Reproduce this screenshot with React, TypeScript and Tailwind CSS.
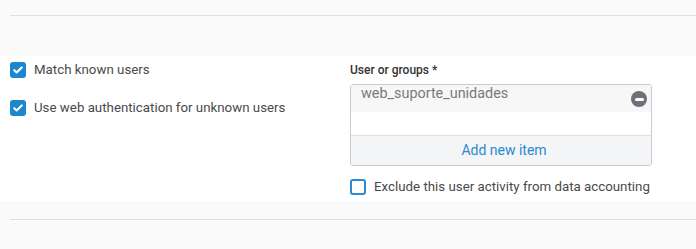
import React from "react";

const Check = () => (
  <span className="flex h-4 w-4 shrink-0 items-center justify-center rounded-[3px] bg-[#1b87cf]">
    <svg viewBox="0 0 16 16" className="h-3 w-3" fill="none">
      <path d="M3 8.3l3.2 3L13 4.6" stroke="#fff" strokeWidth="2.8" strokeLinecap="round" strokeLinejoin="round" />
    </svg>
  </span>
);

const App = () => {
  return (
    <div className="h-[249px] w-[696px] bg-[#fafafa] font-['Roboto',sans-serif]">
      {/* top divider */}
      <div className="pl-[10px] pt-[15px] h-[56px]">
        <div className="h-px bg-[#dedede]" />
      </div>

      {/* form section */}
      <div className="flex h-[145px] bg-white pl-[10px]">
        <div className="flex w-[340px] flex-col gap-[18px] pt-[4px]">
          <label className="flex items-center gap-2 text-[13.3px] text-[#4a4a4a]">
            <Check />
            <span>Match known users</span>
          </label>
          <label className="flex items-center gap-2 text-[13.3px] text-[#4a4a4a]">
            <Check />
            <span>Use web authentication for unknown users</span>
          </label>
        </div>

        <div className="flex w-[302px] flex-col pt-[7px]">
          <div className="text-[12px] font-medium leading-[14px] text-[#333]">User or groups *</div>
          <div className="mt-[7px] flex flex-col overflow-hidden rounded-[3px] border border-[#c9cdd2]">
            <div className="flex h-[27px] items-start justify-between bg-[#f7f7f7] pl-[10px] pr-[4px]">
              <span className="text-[14.4px] leading-[18px] text-[#7a7a7a]">web_suporte_unidades</span>
              <span className="mt-[6px] flex h-4 w-4 items-center justify-center rounded-full bg-[#6d7177]">
                <span className="h-[3px] w-[9px] rounded-sm bg-white" />
              </span>
            </div>
            <div className="h-[23px] bg-white" />
            <div className="flex h-[30px] items-center justify-center border-t border-[#dcdfe3] bg-[#f4f5f6] pl-[6px] text-[14px] text-[#2a8ad2]">
              Add new item
            </div>
          </div>
          <label className="mt-[11px] flex items-center gap-2 text-[13.3px] text-[#4a4a4a]">
            <span className="h-4 w-4 shrink-0 rounded-[3px] border-2 border-[#2a8ad2] bg-white" />
            <span>Exclude this user activity from data accounting</span>
          </label>
        </div>
      </div>

      {/* bottom divider */}
      <div className="pl-[10px] pt-[18px]">
        <div className="h-px bg-[#dedede]" />
      </div>
    </div>
  );
};

export default App;
